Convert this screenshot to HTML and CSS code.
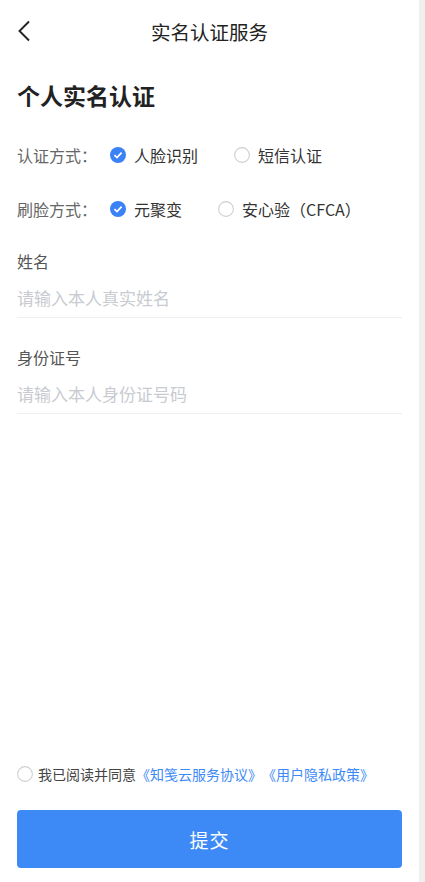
FILE: index.html
```html
<!DOCTYPE html>
<html lang="zh-CN">
<head>
    <meta charset="UTF-8">
    <meta name="viewport" content="width=device-width, initial-scale=1.0">
    <title>实名认证服务</title>
    <link rel="stylesheet" href="styles.css">
</head>
<body>
    <div class="page">
        <div class="nav">
            <span class="back">
                <svg width="14" height="22" viewBox="0 0 14 22"><path d="M12 1.5 L2.5 11 L12 20.5" fill="none" stroke="#222" stroke-width="1.9"/></svg>
            </span>
            <span class="nav-title">实名认证服务</span>
            <span></span>
        </div>

        <h3 class="headline">个人实名认证</h3>

        <div class="option-row">
            <span class="option-label">认证方式：</span>
            <label class="option">
                <svg class="radio" width="16" height="16" viewBox="0 0 16 16"><circle cx="8" cy="8" r="8" fill="#3a82f6"/><path d="M4.4 8.2 L7 10.6 L11.6 5.6" fill="none" stroke="#fff" stroke-width="1.8"/></svg>
                人脸识别
            </label>
            <label class="option">
                <svg class="radio" width="16" height="16" viewBox="0 0 16 16"><circle cx="8" cy="8" r="7.4" fill="#fff" stroke="#cfcfcf" stroke-width="1.1"/></svg>
                短信认证
            </label>
        </div>

        <div class="option-row">
            <span class="option-label">刷脸方式：</span>
            <label class="option">
                <svg class="radio" width="16" height="16" viewBox="0 0 16 16"><circle cx="8" cy="8" r="8" fill="#3a82f6"/><path d="M4.4 8.2 L7 10.6 L11.6 5.6" fill="none" stroke="#fff" stroke-width="1.8"/></svg>
                元聚变
            </label>
            <label class="option">
                <svg class="radio" width="16" height="16" viewBox="0 0 16 16"><circle cx="8" cy="8" r="7.4" fill="#fff" stroke="#cfcfcf" stroke-width="1.1"/></svg>
                安心验（CFCA）
            </label>
        </div>

        <div class="field">
            <div class="field-label">姓名</div>
            <input class="field-input" type="text" placeholder="请输入本人真实姓名">
        </div>
        <div class="field">
            <div class="field-label">身份证号</div>
            <input class="field-input" type="text" placeholder="请输入本人身份证号码">
        </div>

        <div class="spacer"></div>

        <div class="agree">
            <svg width="16" height="16" viewBox="0 0 16 16"><circle cx="8" cy="8" r="7.4" fill="#fff" stroke="#cfcfcf" stroke-width="1.1"/></svg>
            <span>我已阅读并同意</span>
            <a class="link">《知笺云服务协议》《用户隐私政策》</a>
        </div>

        <button class="submit-btn">提交</button>
    </div>
    <div class="scroll-track"></div>
</body>
</html>
```

FILE: styles.css
```css
body {
    margin: 0;
    display: flex;
    background: #fff;
    font-family: "Noto Sans CJK SC", "Noto Sans", sans-serif;
    color: #333;
    text-spacing-trim: space-all;
}

.page {
    width: 419px;
    height: 882px;
    box-sizing: border-box;
    padding: 0 17px 14px;
    display: flex;
    flex-direction: column;
}

.scroll-track {
    width: 6px;
    height: 882px;
    background: #efefef;
}

.nav {
    height: 62px;
    display: grid;
    grid-template-columns: 1fr auto 1fr;
    align-items: center;
}

.back {
    display: flex;
    align-items: center;
}

.nav-title {
    font-size: 19.5px;
    color: #222;
}

.headline {
    margin: 0;
    padding: 18px 0;
    font-size: 23px;
    line-height: 30px;
    font-weight: bold;
    color: #222;
}

.option-row {
    height: 54px;
    display: flex;
    align-items: center;
    font-size: 16px;
}

.option-label {
    width: 93px;
    color: #666;
}

.option {
    display: flex;
    align-items: center;
    gap: 8px;
    color: #333;
    margin-right: 36px;
}

.field-label {
    margin-top: 13px;
    font-size: 16px;
    line-height: 24px;
    color: #555;
}

.field + .field .field-label {
    margin-top: 27px;
}

.field-input {
    display: block;
    width: 100%;
    height: 40px;
    margin-top: 4px;
    padding: 0;
    border: none;
    border-bottom: 1px solid #eee;
    outline: none;
    font-family: inherit;
    font-size: 17px;
    color: #333;
}

.field-input::placeholder {
    color: #c8cbd0;
}

.spacer {
    flex: 1;
}

.agree {
    height: 22px;
    display: flex;
    align-items: center;
    font-size: 14px;
    color: #444;
}

.agree svg {
    margin-right: 5px;
}

.link {
    color: #3d8af7;
}

.submit-btn {
    margin-top: 25px;
    height: 58px;
    border: none;
    border-radius: 4px;
    background: #3d8af7;
    color: #fff;
    font-family: inherit;
    font-size: 19px;
    letter-spacing: 1px;
}
```
